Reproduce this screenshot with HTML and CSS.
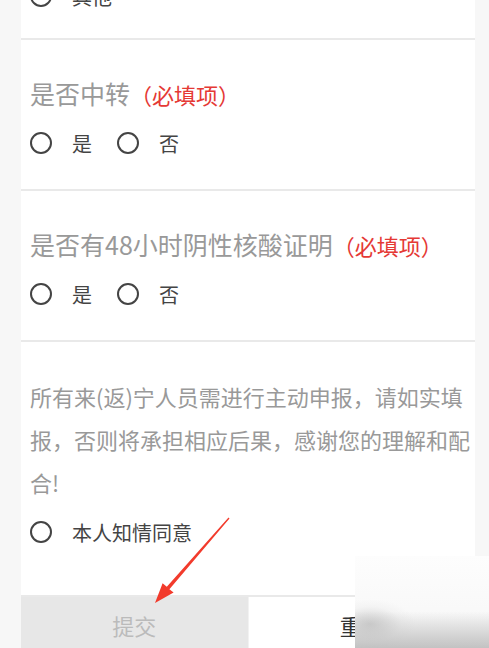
FILE: index.html
```html
<!DOCTYPE html>
<html lang="zh-CN">
<head>
    <meta charset="UTF-8">
    <meta name="viewport" content="width=device-width, initial-scale=1.0">
    <title>来(返)宁人员申报</title>
    <link rel="stylesheet" href="styles.css">
</head>
<body>
    <form class="form">
        <div class="section section-top">
            <label class="radio"><span class="dot"></span><span>其他</span></label>
        </div>

        <div class="section">
            <div class="title">是否中转<span class="required">（必填项）</span></div>
            <div class="options">
                <label class="radio"><span class="dot"></span><span>是</span></label>
                <label class="radio"><span class="dot"></span><span>否</span></label>
            </div>
        </div>

        <div class="section">
            <div class="title">是否有48小时阴性核酸证明<span class="required">（必填项）</span></div>
            <div class="options">
                <label class="radio"><span class="dot"></span><span>是</span></label>
                <label class="radio"><span class="dot"></span><span>否</span></label>
            </div>
        </div>

        <div class="section section-notice">
            <p class="notice">所有来(返)宁人员需进行主动申报，请如实填报，否则将承担相应后果，感谢您的理解和配合!</p>
            <label class="radio"><span class="dot"></span><span>本人知情同意</span></label>
        </div>

        <div class="actions">
            <button type="button" class="btn btn-submit">提交</button>
            <button type="button" class="btn btn-reset">重置</button>
        </div>
    </form>

    <!-- annotation arrow drawn over the screenshot -->
    <svg class="arrow" width="489" height="648" viewBox="0 0 489 648">
        <polygon fill="#f23b2c" points="228.5,517.6 229.5,518.4 169.4,589.2 173.6,592.6 155,603 162.6,583.2 166.8,586.8"/>
    </svg>
    <div class="watermark"></div>
</body>
</html>
```

FILE: styles.css
```css
body {
    margin: 0;
    background-color: #f7f7f7;
    font-family: "Noto Sans CJK SC", "Noto Sans", sans-serif;
    height: 648px;
    overflow: hidden;
}
.form {
    width: 454px;
    margin: -16px 0 0 21px;
}
.section {
    background-color: #fff;
    border-bottom: 2px solid #e9e9e9;
    padding: 38px 0 34px 9px;
}
.section-top {
    padding: 0 0 30px 9px;
}
.title {
    font-size: 25px;
    line-height: 30px;
    height: 30px;
    color: #999;
    white-space: nowrap;
}
.required {
    font-size: 22px;
    color: #e53935;
}
.options {
    display: flex;
    gap: 25px;
    margin-top: 23px;
}
.radio {
    display: flex;
    align-items: center;
    gap: 20px;
    height: 24px;
    font-size: 20px;
    color: #444;
}
.dot {
    width: 18px;
    height: 18px;
    border: 2px solid #444;
    border-radius: 50%;
}
.section-notice {
    padding: 33px 4px 51px 9px;
}
.notice {
    margin: 0 0 16px;
    font-size: 22px;
    line-height: 43px;
    color: #999;
}
.actions {
    display: flex;
}
.btn {
    flex: 1;
    height: 56px;
    border: none;
    font-family: inherit;
    font-size: 22px;
    padding: 0;
}
.btn-submit {
    background-color: #e7e7e7;
    color: #bbb;
    border-right: 1px solid #f2f2f2;
}
.btn-reset {
    background-color: #fff;
    color: #333;
}
.arrow {
    position: absolute;
    left: 0;
    top: 0;
    pointer-events: none;
}
.watermark {
    position: absolute;
    left: 355px;
    top: 556px;
    width: 134px;
    height: 92px;
    background:
        linear-gradient(to bottom, rgba(255, 255, 255, 0) 60%, rgba(185, 185, 185, 0.85) 100%),
        radial-gradient(ellipse 45px 25px at 15px 68px, rgba(205, 205, 205, 0.95) 0%, rgba(240, 240, 240, 0.6) 70%, rgba(250, 250, 250, 0) 100%),
        linear-gradient(to bottom, #fdfdfd 0%, #f6f6f6 100%);
}
```
